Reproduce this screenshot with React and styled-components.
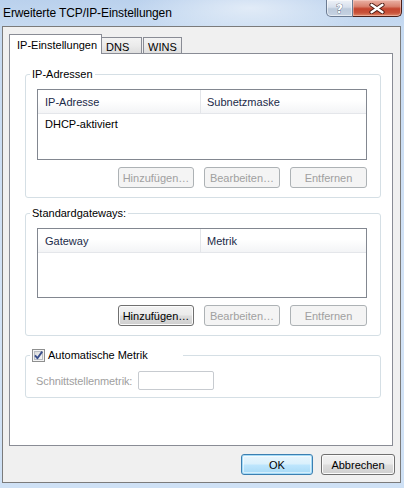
import React from 'react';
import styled, { createGlobalStyle, css } from 'styled-components';

const GlobalStyle = createGlobalStyle`
  html, body { margin: 0; padding: 0; }
  body {
    font-family: "Liberation Sans", Arial, sans-serif;
    font-size: 11px;
    color: #000;
    background: #cddff3;
  }
  * { box-sizing: border-box; }
`;

const Window = styled.div`
  width: 404px;
  height: 488px;
  display: flex;
  flex-direction: column;
  padding: 0 3px 5px 2px;
  overflow: hidden;
  background:
    radial-gradient(ellipse 120px 30px at 250px 8px, rgba(255, 255, 255, 0.55), rgba(255, 255, 255, 0)),
    linear-gradient(180deg, #bad1ed 0px, #c6daf1 26px, #d3e3f6 300px, #cfe1f5 100%);
`;

const TitleBar = styled.div`
  height: 26px;
  display: flex;
  align-items: flex-start;
  flex-shrink: 0;
`;

const Title = styled.span`
  height: 25px;
  display: flex;
  align-items: center;
  padding-left: 1px;
  font-size: 12px;
  color: #000;
  letter-spacing: -0.1px;
`;

const CaptionButtons = styled.div`
  margin-left: auto;
  margin-right: -1px;
  display: flex;
  height: 17px;
`;

const CaptionButton = styled.div`
  height: 17px;
  display: flex;
  align-items: center;
  justify-content: center;
  border: 1px solid ${p => (p.$close ? '#4a1f18' : '#6b7b92')};
  border-top: none;
  ${p =>
    p.$close
      ? css`
          width: 49px;
          border-left: none;
          border-radius: 0 0 5px 0;
          background: linear-gradient(180deg, #eab2a6 0%, #d9826f 40%, #c4452e 55%, #c9533a 80%, #de8a6c 100%);
          box-shadow: inset 0 0 0 1px rgba(255, 220, 210, 0.45);
        `
      : css`
          width: 27px;
          border-radius: 0 0 0 5px;
          background: linear-gradient(180deg, #eef2f8 0%, #d7e0ec 45%, #bccadb 55%, #c6d3e3 100%);
          box-shadow: inset 0 0 0 1px rgba(255, 255, 255, 0.55);
        `}
`;

const HelpGlyph = styled.span`
  font-family: "DejaVu Sans", sans-serif;
  font-weight: bold;
  font-size: 12px;
  line-height: 12px;
  color: #fff;
  margin-top: 1px;
  -webkit-text-stroke: 0.6px #3c4a60;
  paint-order: stroke fill;
`;

const Client = styled.div`
  flex: 1;
  display: flex;
  flex-direction: column;
  border: 1px solid #7b7b7b;
  background: #f0f0f0;
  padding: 7px 7px 7px 6px;
`;

const TabStrip = styled.div`
  height: 19px;
  display: flex;
  align-items: flex-end;
  flex-shrink: 0;
`;

const Tab = styled.div`
  position: relative;
  display: flex;
  align-items: center;
  width: ${p => p.$width}px;
  border: 1px solid #898c95;
  border-bottom: none;
  ${p =>
    p.$active
      ? css`
          height: 20px;
          margin-bottom: -1px;
          padding-left: 7px;
          background: #fff;
          z-index: 1;
        `
      : css`
          height: 16px;
          padding: 3px 0 0 4px;
          background: linear-gradient(180deg, #f3f3f3 0%, #ebebeb 50%, #dedede 100%);
        `}
  ${p => p.$joined && css`border-left: none;`}
  margin-left: ${p => p.$gap || 0}px;
`;

const Page = styled.div`
  height: 393px;
  flex-shrink: 0;
  border: 1px solid #898c95;
  background: #fff;
  padding: 0 11px 0 15px;
  display: flex;
  flex-direction: column;
`;

const Group = styled.div`
  position: relative;
  margin-top: ${p => p.$top}px;
  border: 1px solid #d5dfe5;
  border-radius: 3px;
  padding: ${p => p.$pad};
  box-shadow: inset 1px 1px 0 #fff;
`;

const Caption = styled.div`
  position: absolute;
  top: -7px;
  left: 4px;
  height: 13px;
  line-height: 13px;
  padding: 0 2px;
  background: #fff;
  display: flex;
  align-items: center;
  gap: 3px;
  ${p => p.$width && css`width: ${p.$width}px;`}
`;

const ListView = styled.div`
  height: ${p => p.$height}px;
  border: 1px solid #828790;
  background: #fff;
`;

const ListHeader = styled.div`
  height: 24px;
  display: grid;
  grid-template-columns: 163px 1fr;
  background: linear-gradient(180deg, #ffffff 0%, #ffffff 45%, #f3f4f6 100%);
  border-bottom: 1px solid #e4e6ea;
`;

const HeaderCell = styled.div`
  display: flex;
  align-items: center;
  padding-left: ${p => (p.$first ? 7 : 6)}px;
  color: #1b2a48;
  ${p => p.$first && css`border-right: 1px solid #e3e5e9;`}
`;

const ListRow = styled.div`
  height: 19px;
  display: flex;
  align-items: center;
  padding-left: 7px;
  padding-top: 1px;
`;

const ButtonRow = styled.div`
  display: flex;
  justify-content: flex-end;
  gap: ${p => p.$gap || 10}px;
  margin-top: ${p => p.$top || 0}px;
`;

const Button = styled.button`
  font: inherit;
  width: ${p => p.$width || 76}px;
  height: 21px;
  padding: 0;
  margin: 0;
  border-radius: 3px;
  color: #000;
  border: 1px solid #707070;
  background: linear-gradient(180deg, #f2f2f2 0%, #ebebeb 48%, #dddddd 52%, #cfcfcf 100%);
  box-shadow: inset 0 0 0 1px #fbfbfb;
  &:disabled {
    color: #a0a0a0;
    border-color: #adb2b5;
    background: #f4f4f4;
    box-shadow: none;
  }
  ${p =>
    p.$default &&
    css`
      border-color: #3c7fb1;
      background: linear-gradient(180deg, #eaf6fd 0%, #d9f0fc 48%, #bee6fd 52%, #a7d9f5 100%);
      box-shadow: inset 0 0 0 1px #a5dbf7, inset 0 0 0 2px rgba(255, 255, 255, 0.5);
    `}
`;

const FieldRow = styled.div`
  display: flex;
  align-items: center;
  gap: 6px;
`;

const MutedLabel = styled.span`
  color: #a0a0a0;
  letter-spacing: -0.1px;
`;

const TextBox = styled.div`
  width: 76px;
  height: 19px;
  border: 1px solid #c7cbd0;
  border-radius: 2px;
  background: #fff;
`;

const Footer = styled.div`
  display: flex;
  justify-content: flex-end;
  gap: 8px;
  margin-top: 8px;
  margin-right: -2px;
`;

const CheckBox = () => (
  <svg width="13" height="13" viewBox="0 0 13 13">
    <defs>
      <linearGradient id="cbfill" x1="0" y1="0" x2="1" y2="1">
        <stop offset="0" stopColor="#d8d8d8" />
        <stop offset="1" stopColor="#fbfbfb" />
      </linearGradient>
    </defs>
    <rect x="0.5" y="0.5" width="12" height="12" fill="#f4f4f4" stroke="#8e8f8f" />
    <rect x="2.5" y="2.5" width="8" height="8" fill="url(#cbfill)" stroke="#b8bcc2" />
    <path d="M3 6.4 L5.4 9.2 L10.2 2.6" fill="none" stroke="#3a4f8c" strokeWidth="1.9" strokeLinejoin="round" />
  </svg>
);

const CloseGlyph = () => (
  <svg width="16" height="11" viewBox="0 0 16 11">
    <path d="M2.5 1.8 L13.5 9.2 M13.5 1.8 L2.5 9.2" stroke="#4a1a12" strokeWidth="4.2" strokeLinecap="round" />
    <path d="M2.5 1.8 L13.5 9.2 M13.5 1.8 L2.5 9.2" stroke="#ffffff" strokeWidth="2.4" strokeLinecap="round" />
  </svg>
);

export default function App() {
  return (
    <>
      <GlobalStyle />
      <Window>
        <TitleBar>
          <Title>Erweiterte TCP/IP-Einstellungen</Title>
          <CaptionButtons>
            <CaptionButton>
              <HelpGlyph>?</HelpGlyph>
            </CaptionButton>
            <CaptionButton $close>
              <CloseGlyph />
            </CaptionButton>
          </CaptionButtons>
        </TitleBar>

        <Client>
          <TabStrip>
            <Tab $active $width={93}>IP-Einstellungen</Tab>
            <Tab $joined $width={40}>DNS</Tab>
            <Tab $width={39} $gap={1}>WINS</Tab>
          </TabStrip>

          <Page>
            <Group $top={20} $pad="14px 13px 9px 11px">
              <Caption>IP-Adressen</Caption>
              <ListView $height={71}>
                <ListHeader>
                  <HeaderCell $first>IP-Adresse</HeaderCell>
                  <HeaderCell>Subnetzmaske</HeaderCell>
                </ListHeader>
                <ListRow>DHCP-aktiviert</ListRow>
              </ListView>
              <ButtonRow $top={7}>
                <Button disabled>Hinzufügen…</Button>
                <Button disabled>Bearbeiten…</Button>
                <Button disabled $width={77}>Entfernen</Button>
              </ButtonRow>
            </Group>

            <Group $top={15} $pad="14px 13px 9px 11px">
              <Caption>Standardgateways:</Caption>
              <ListView $height={70}>
                <ListHeader>
                  <HeaderCell $first>Gateway</HeaderCell>
                  <HeaderCell>Metrik</HeaderCell>
                </ListHeader>
              </ListView>
              <ButtonRow $top={7}>
                <Button>Hinzufügen…</Button>
                <Button disabled>Bearbeiten…</Button>
                <Button disabled $width={77}>Entfernen</Button>
              </ButtonRow>
            </Group>

            <Group $top={19} $pad="15px 13px 7px 10px">
              <Caption $width={153}>
                <CheckBox />
                <span>Automatische Metrik</span>
              </Caption>
              <FieldRow>
                <MutedLabel>Schnittstellenmetrik:</MutedLabel>
                <TextBox />
              </FieldRow>
            </Group>
          </Page>

          <Footer>
            <Button $default $width={72}>OK</Button>
            <Button $width={74}>Abbrechen</Button>
          </Footer>
        </Client>
      </Window>
    </>
  );
}
